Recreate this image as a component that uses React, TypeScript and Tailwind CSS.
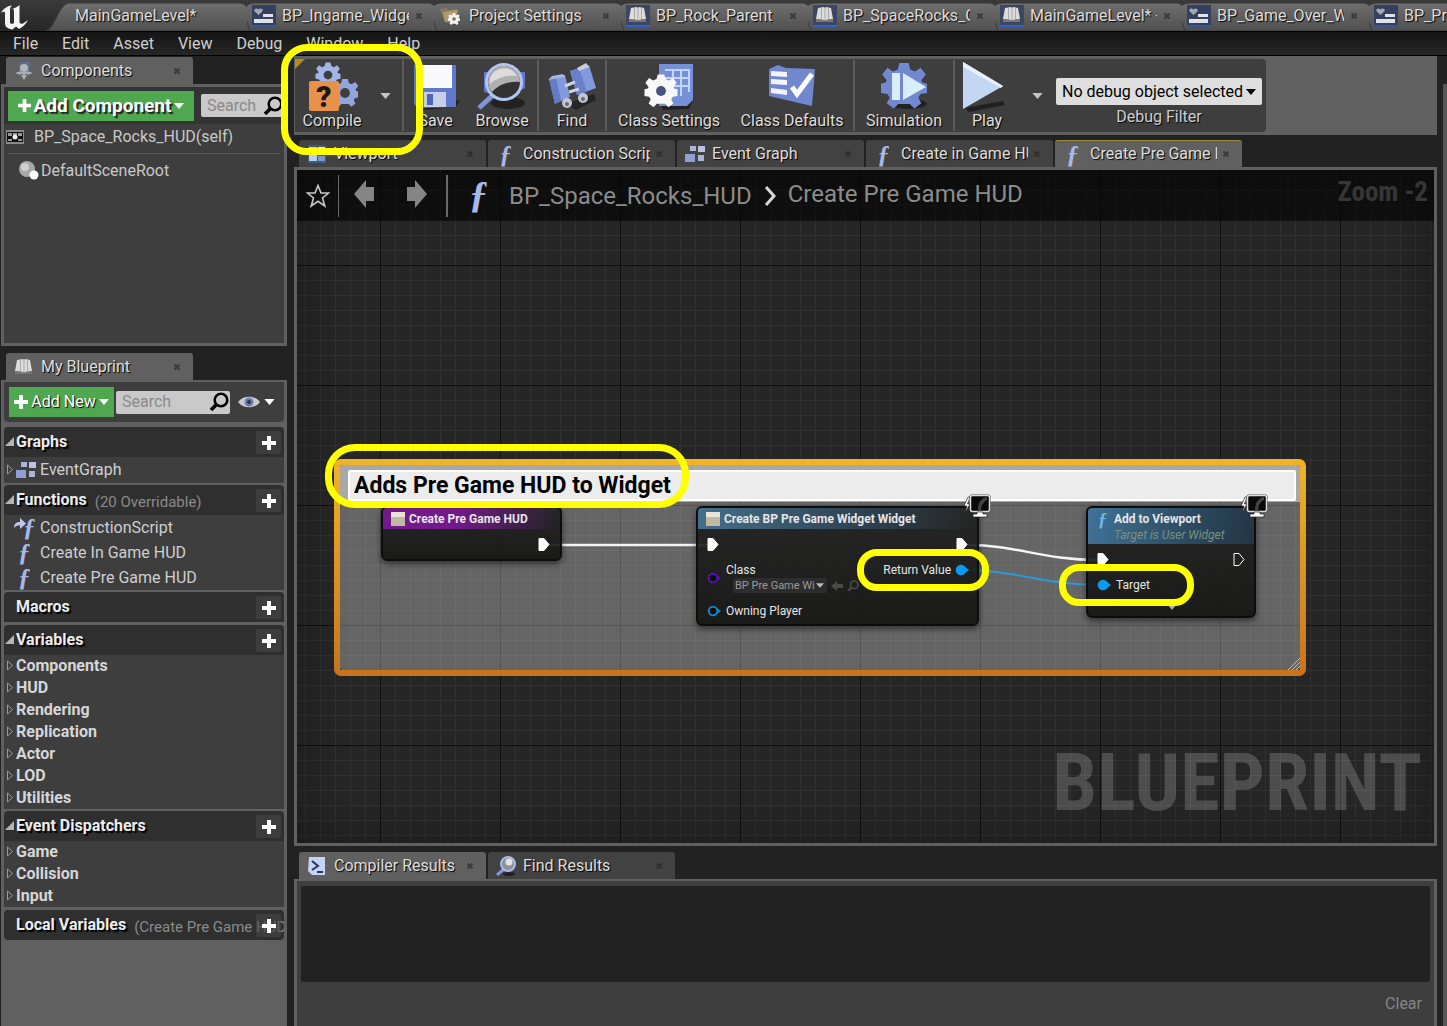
import React from "react";
import type { ReactNode } from "react";

const SHADOW = "[text-shadow:1px_1px_1px_#000]";

/* ---------- small icons ---------- */

function Logo() {
  return (
    <svg viewBox="0 0 30 27" className="h-[27px] w-[30px]" aria-label="Unreal">
      <path
        fill="#f4f4f4"
        d="M1 9C3 5 7 2 12 1.500C10 3.500 10 4.500 10 6V18C10 20 12 20.500 14 19V7C14 5.500 13.500 5 12 5C15 4 18 2.500 20 1C19.500 2 19.500 3 19.500 4.500V18C19.500 19.500 21 20 23 19.500L28 16C26 20 23 23 19 25L16 22.500L12.500 25.500C8 25 5 23 5 19V9C5 7 3 7.500 1 9Z"
      />
    </svg>
  );
}

function WidgetIcon() {
  return (
    <svg viewBox="0 0 24 22" className="h-[22px] w-6">
      <rect width="24" height="22" fill="#33405f" />
      <rect y="20" width="24" height="2" fill="#3a5690" />
      <path d="M6.500 10L2.500 6.200C1.500 4 4.500 2.500 6.500 4.500C8.500 2.500 11.500 4 10.500 6.200Z" fill="#a4a9b1" />
      <rect x="11" y="9" width="10" height="3" fill="#dfe2e7" />
      <rect x="2" y="14" width="19" height="4" fill="#dfe2e7" />
    </svg>
  );
}

function BookShape() {
  return (
    <>
      <path d="M5 3L11 2L12 3L13 2L18 3L20 14L13 15L12 16L11 15L3 14Z" fill="#dcdcdc" />
      <path d="M12 3V15M8.500 3V14M15.500 3V14" stroke="#a9a9a9" strokeWidth="1" fill="none" />
      <path d="M3 14L11 15L12 17L13 15L20 14V17L3 17Z" fill="#777" />
    </>
  );
}

function BlueprintIcon() {
  return (
    <svg viewBox="0 0 24 22" className="h-[22px] w-6">
      <rect width="24" height="22" fill="#3d4660" />
      <rect y="20" width="24" height="2" fill="#2f63c9" />
      <BookShape />
    </svg>
  );
}

function BookIcon() {
  return (
    <svg viewBox="0 0 24 20" className="h-5 w-6">
      <BookShape />
    </svg>
  );
}

const GEAR =
  "M-2 -10H2L2.700 -7.200L4.800 -6.300L7.200 -7.900L9.500 -5L7.500 -2.500L8 -1.500L10 -1V3L7.200 3.500L6.200 5L7.500 7.500L4.500 9.800L2.500 7.800L-2.500 7.800L-4.500 9.800L-7.500 7.500L-6.200 5L-7.200 3.500L-10 3V-1L-8 -1.500L-7.500 -2.500L-9.500 -5L-7.200 -7.900L-4.800 -6.300L-2.700 -7.200Z";

function SettingsFolderIcon() {
  return (
    <svg viewBox="0 0 24 22" className="h-[22px] w-6">
      <path d="M1 4L8 3L10 5L19 4L18 10L12 18L6 17Z" fill="#8d7958" />
      <path d="M4 7L19 5L16 15L6 17Z" fill="#b09a72" />
      <g transform="translate(15 14) scale(.6)">
        <path d={GEAR} fill="#f3f3f3" />
        <circle r="3" fill="#7b6c55" />
      </g>
    </svg>
  );
}

function ComponentsIcon() {
  return (
    <svg viewBox="0 0 20 20" className="h-5 w-5">
      <rect x="5" y="1" width="11" height="9" fill="#5a6f8c" />
      <circle cx="10" cy="7" r="4" fill="#b3b8bf" />
      <path d="M1 12L7 10V14ZM19 12L13 10V14ZM10 19L7 14H13Z" fill="#a9aeb6" />
      <path d="M3 12H17M10 10V16" stroke="#a9aeb6" strokeWidth="2" />
    </svg>
  );
}

function Fn({ big = false, light = false }: { big?: boolean; light?: boolean }) {
  return (
    <span
      aria-hidden="true"
      className={
        "font-['Liberation_Serif',serif] font-bold italic leading-none " +
        (big ? "text-[38px] " : light ? "text-[18px] " : "text-[25px] ") +
        (light ? "text-[#6fb7ea]" : "text-[#a9b9e6]")
      }
    >
      ƒ
    </span>
  );
}

function GraphIcon() {
  return (
    <svg viewBox="0 0 20 18" className="h-[18px] w-5">
      <rect x="5" y="1" width="6" height="5" fill="#a9b6d8" />
      <rect x="13" y="1" width="7" height="6" fill="#b8c4e2" />
      <rect x="0" y="9" width="10" height="8" fill="#8f9fd4" />
      <rect x="13" y="10" width="6" height="6" fill="#a9b6d8" />
    </svg>
  );
}

function ViewportIcon() {
  return (
    <svg viewBox="0 0 20 20" className="h-5 w-5">
      <rect x="1" y="1" width="18" height="18" fill="#41597f" />
      <rect x="2" y="3" width="8" height="14" fill="#b9cdf0" />
      <rect x="11" y="3" width="7" height="8" fill="#e1eafa" />
      <rect x="11" y="12" width="7" height="5" fill="#7d97cf" />
    </svg>
  );
}

function ConsoleIcon() {
  return (
    <svg viewBox="0 0 20 20" className="h-5 w-5">
      <path d="M2 1H18V19H5L1 15Z" fill="#c3d4f5" />
      <path d="M5 5L11 10L5 14M10 16H16" stroke="#2c3550" strokeWidth="2" fill="none" />
    </svg>
  );
}

function Lens({ className }: { className: string }) {
  return (
    <svg viewBox="0 0 20 20" className={className}>
      <circle cx="12" cy="8" r="6.300" fill="none" stroke="currentColor" strokeWidth="2.600" />
      <path d="M8 12L2 18" stroke="currentColor" strokeWidth="3.800" />
    </svg>
  );
}

function FindResultsIcon() {
  return (
    <svg viewBox="0 0 20 20" className="h-5 w-5">
      <ellipse cx="13" cy="18" rx="6" ry="2" fill="#222" />
      <path d="M8 13L1 19" stroke="#8295dd" strokeWidth="3" />
      <circle cx="12" cy="8" r="7" fill="#8d9297" stroke="#a9b9ee" strokeWidth="2" />
      <circle cx="13" cy="6" r="3.500" fill="#e2e2e2" />
    </svg>
  );
}

function Plus({ className }: { className: string }) {
  return (
    <svg viewBox="0 0 14 14" className={className}>
      <path d="M5 0H9V5H14V9H9V14H5V9H0V5H5Z" fill="#fff" />
    </svg>
  );
}

function Caret({ className }: { className: string }) {
  return (
    <svg viewBox="0 0 12 7" className={className} aria-hidden="true">
      <path d="M0 0H12L6 7Z" fill="currentColor" />
    </svg>
  );
}

function Close() {
  return (
    <svg viewBox="0 0 8 8" className="h-2 w-2">
      <path d="M1.500 1.500L6.500 6.500M6.500 1.500L1.500 6.500" stroke="#222" strokeOpacity=".6" strokeWidth="2" />
    </svg>
  );
}

/* ---------- toolbar pictures ---------- */

function Pic({ children }: { children: ReactNode }) {
  return (
    <svg viewBox="0 0 52 50" className="h-[50px] w-[52px]">
      {children}
    </svg>
  );
}

const CompilePic = (
  <Pic>
    <g transform="translate(22 13) scale(1.250)">
      <path d={GEAR} fill="#a3b5e6" />
      <circle r="3.500" fill="#3e3e3e" />
    </g>
    <g transform="translate(39 31) scale(1.400)">
      <path d={GEAR} fill="#93a5dd" />
      <circle r="3.500" fill="#3e3e3e" />
    </g>
    <rect x="3" y="19" width="30" height="30" rx="2" fill="#e8914b" />
    <text x="18" y="45" textAnchor="middle" fontSize="30" fontWeight="900" fontFamily="Roboto" fill="#1a1a1a">
      ?
    </text>
  </Pic>
);

const SavePic = (
  <Pic>
    <path d="M10 44L50 38L46 45L12 48Z" fill="#222" />
    <path d="M4 3H46V45L8 46L4 42Z" fill="#5f78c9" />
    <path d="M8 3H42V26H8Z" fill="#f7f9fd" />
    <rect x="14" y="30" width="22" height="15" fill="#c5cfea" />
    <rect x="17" y="32" width="6" height="11" fill="#4d66b5" />
  </Pic>
);

const BrowsePic = (
  <Pic>
    <ellipse cx="32" cy="41" rx="17" ry="6" fill="#222" />
    <path d="M17 33L3 46" stroke="#7f94db" strokeWidth="5" />
    <path d="M8 10H49V26L30 36L8 30Z" fill="#6279c4" />
    <circle cx="28" cy="20" r="17.500" fill="#333" stroke="#b4c5f5" strokeWidth="3" />
    <path d="M12 20A16 16 0 0 1 44 20C36 19 24 21 16 30A15 15 0 0 1 12 20Z" fill="#b0b0b0" />
    <path d="M14 16A15 15 0 0 1 41 14C32 13 22 15 14 22Z" fill="#dcdcdc" />
  </Pic>
);

const FindPic = (
  <Pic>
    <path d="M20 42L48 32L50 38L30 48Z" fill="#252525" />
    <path d="M24 9L43 3L50 26L31 33Z" fill="#8299e0" />
    <path d="M24 9L33 6L41 30L31 33Z" fill="#6a80cb" />
    <path d="M3 17L19 13L24 35L9 42Z" fill="#8299e0" />
    <path d="M3 17L10 15L15 39L9 42Z" fill="#657bc4" />
    <path d="M31 6L40 1L43 5L33 9Z" fill="#c8cede" />
    <path d="M2 18L6 14L17 12L19 15Z" fill="#a9b5de" />
    <path d="M19 24L29 20M23 30L33 27" stroke="#cdd2df" strokeWidth="3" />
    <circle cx="21" cy="41" r="5" fill="#c3c7d2" />
    <circle cx="37" cy="36" r="5" fill="#c3c7d2" />
    <circle cx="21" cy="42" r="2" fill="#6a6a6a" />
    <circle cx="37" cy="37" r="2" fill="#6a6a6a" />
  </Pic>
);

const SettingsPic = (
  <Pic>
    <path d="M18 42L51 36L46 47L20 48Z" fill="#222" />
    <path d="M16 2H50V38L44 44H16Z" fill="#7590d6" />
    <path d="M22 8H46V30M30 8V30M38 8V34M22 16H46M28 24H46" stroke="#c4d4f8" strokeWidth="2" fill="none" />
    <g transform="translate(18 29) scale(1.650)">
      <path d={GEAR} fill="#f8f8f8" />
      <circle r="3" fill="#47547c" />
    </g>
  </Pic>
);

const DefaultsPic = (
  <Pic>
    <path d="M3 7L12 3L20 6L49 7L46 44L3 34Z" fill="#7187cf" />
    <path d="M5 9L21 10V15L5 14ZM5 17L21 18V23L5 22ZM5 26L21 28V33L5 31Z" fill="#f2f4fa" />
    <path d="M26 25L31 32L46 12" stroke="#fff" strokeWidth="5" fill="none" />
  </Pic>
);

const SimulationPic = (
  <Pic>
    <ellipse cx="30" cy="42" rx="19" ry="5" fill="#222" />
    <g transform="translate(26 24) scale(2.300)">
      <path d={GEAR} fill="#7389cf" />
    </g>
    <path d="M14 11H22V38H14Z" fill="#d8effb" />
    <path d="M25 11L48 25L25 38Z" fill="#d8effb" />
  </Pic>
);

const PlayPic = (
  <Pic>
    <path d="M4 46L42 39L44 43L8 50Z" fill="#202020" />
    <path d="M2 0L42 24L2 47Z" fill="#c3d6f4" />
    <path d="M2 0L42 24L40 26L2 5Z" fill="#e8f0fb" />
  </Pic>
);

/* ---------- window tabs ---------- */

function WindowTab({ label, icon, first = false, closable = true }: { label: string; icon?: ReactNode; first?: boolean; closable?: boolean }) {
  return (
    <button className={"relative flex h-[29px] shrink-0 items-center pb-0.5 text-left " + (first ? "w-[202px] pl-[30px]" : "w-[187px] pl-[5px]")}>
      <svg viewBox="0 0 210 29" preserveAspectRatio="none" className="absolute top-0 left-0 h-full w-[calc(100%+16px)]">
        <defs>
          <linearGradient id="wtab" x2="0" y2="1">
            <stop offset="0" stopColor="#6e6e6e" />
            <stop offset="1" stopColor="#505050" />
          </linearGradient>
        </defs>
        <path
          d={first ? "M0 29C10 27 12 4 22 1H188C200 2 200 25 210 29Z" : "M3 29C-2 14 -8 2 8 1H188C200 2 200 25 210 29Z"}
          fill="url(#wtab)"
          stroke="#3a3a3a"
        />
      </svg>
      {icon && <span className="relative w-[30px]">{icon}</span>}
      <span className={"relative w-[127px] overflow-hidden text-[16px] leading-5 whitespace-nowrap text-[#dcdcdc] " + SHADOW}>{label}</span>
      {closable && (
        <span className="relative ml-1.5">
          <Close />
        </span>
      )}
    </button>
  );
}

function DockTab({ label, icon, active = false, current = false }: { label: string; icon: ReactNode; active?: boolean; current?: boolean }) {
  return (
    <button
      className={
        "flex h-[27px] w-[187px] shrink-0 items-center rounded-t-[3px] text-left " +
        (active ? "bg-[#606060] " : "bg-[#424242] ") +
        (current ? "border-t border-[#a08a3c]" : "border-t border-transparent")
      }
    >
      <span className="flex w-[35px] shrink-0 justify-center">{icon}</span>
      <span className={"w-[127px] overflow-hidden text-[16px] leading-5 whitespace-nowrap text-[#dedede] " + SHADOW}>{label}</span>
      <span className="ml-[5px]">
        <Close />
      </span>
    </button>
  );
}

/* ---------- left column ---------- */

function SearchBox({ id, className }: { id: string; className: string }) {
  return (
    <div className={"flex h-[23px] items-center rounded-[2px] bg-[#c9c9c9] pr-px " + className}>
      <label htmlFor={id} className="sr-only">
        Search
      </label>
      <input id={id} placeholder="Search" className="w-0 min-w-0 flex-1 bg-transparent pl-1.5 text-[16px] leading-5 text-black outline-none placeholder:text-[#8a8a8a]" />
      <Lens className="h-5 w-5 shrink-0 text-black" />
    </div>
  );
}

function SectionHead({ title, note, open }: { title: string; note?: string; open?: boolean }) {
  return (
    <div className="relative flex h-[30px] items-center rounded-t-[4px] bg-[#2f2f2f]">
      <span className="w-3 shrink-0 pl-px">
        {open && (
          <svg viewBox="0 0 9 9" className="-mt-0.5 h-[9px] w-[9px]">
            <path d="M9 0V9H0Z" fill="#b5b5b5" />
          </svg>
        )}
      </span>
      <h2 className="shrink-0 text-[16px] leading-5 font-bold text-[#ececec] [text-shadow:2px_2px_1px_#000]">{title}</h2>
      {note && <span className="ml-2 overflow-hidden pt-[3px] text-[15px] leading-5 whitespace-nowrap text-[#8a8a8a]">{note}</span>}
      <button aria-label={"Add to " + title} className="absolute top-1 right-[3px] flex h-[23px] w-[25px] items-center justify-center rounded-[2px] bg-[#48484899]">
        <Plus className="h-[14px] w-[14px]" />
      </button>
    </div>
  );
}

function Expander() {
  return (
    <svg viewBox="0 0 6 11" className="mx-[3px] -mt-0.5 h-[11px] w-1.5 shrink-0">
      <path d="M.5 1V10L5.500 5.500Z" fill="none" stroke="#9a9a9a" />
    </svg>
  );
}

function Categories({ items }: { items: string[] }) {
  return (
    <ul className="bg-[#3e3e3e]">
      {items.map((t) => (
        <li key={t} className="flex h-[22px] items-center text-[16px] leading-5 font-bold text-[#d6d6d6]">
          <Expander />
          {t}
        </li>
      ))}
    </ul>
  );
}

function FnRow({ label, icon }: { label: string; icon: ReactNode }) {
  return (
    <li className="flex h-[25px] items-center text-[16px] leading-5 text-[#cfcfcf]">
      <span className="ml-2.5 flex w-[26px] shrink-0 pl-1">{icon}</span>
      {label}
    </li>
  );
}

function LeftColumn() {
  return (
    <aside className="flex w-[286px] shrink-0 flex-col overflow-hidden pt-px">
      <div className="flex pl-[5px]">
        <DockTab active label="Components" icon={<ComponentsIcon />} />
      </div>
      <section className="flex h-[262px] shrink-0 flex-col border-[3px] border-[#606060] bg-[#3e3e3e]">
        <div className="flex h-[37px] items-center gap-2 bg-[#333] pl-1">
          <button className="flex h-[30px] w-[186px] items-center justify-center gap-[3px] bg-[#4fa750] text-[19px] leading-6 font-bold text-white [text-shadow:2px_2px_1px_#222]">
            <Plus className="h-[13px] w-[13px]" />
            <span className="whitespace-nowrap">Add Component</span>
            <Caret className="h-1.5 w-[10px]" />
          </button>
          <SearchBox id="component-search" className="-ml-px flex-1" />
        </div>
        <div className="mx-1 flex h-[30px] items-center border-b border-[#565656] pb-1">
          <svg viewBox="0 0 18 14" className="-ml-0.5 h-[14px] w-[18px] shrink-0">
            <rect width="18" height="14" fill="#8a8a8a" />
            <rect x="1" y="2" width="16" height="10" fill="#111" />
            <path d="M2 3H6V6H2ZM7 3H11V5H7ZM12 3H16V6H12ZM2 9H6V11H2ZM12 9H16V11H12Z" fill="#999" />
            <circle cx="9" cy="7" r="2.500" fill="#eee" />
          </svg>
          <span className="ml-2.5 text-[16px] leading-5 text-[#c8c8c8]">BP_Space_Rocks_HUD(self)</span>
        </div>
        <div className="flex h-[34px] items-center pl-[14px]">
          <svg viewBox="0 0 22 20" className="h-5 w-[22px] shrink-0">
            <circle cx="9" cy="8" r="8" fill="#a8a8a8" />
            <circle cx="7" cy="6" r="4" fill="#cfcfcf" />
            <circle cx="16" cy="14" r="4.500" fill="#fff" />
          </svg>
          <span className="ml-px text-[16px] leading-5 text-[#c8c8c8]">DefaultSceneRoot</span>
        </div>
      </section>
      <div className="mt-[7px] flex pl-[5px]">
        <DockTab active label="My Blueprint" icon={<BookIcon />} />
      </div>
      <section className="flex-1 border-x-[3px] border-t-2 border-[#606060] bg-[#606060]">
        <div className="flex h-10 items-center rounded-b-[4px] bg-[#3e3e3e] pl-[5px]">
          <button className={"flex h-[30px] w-[105px] items-center justify-center gap-[3px] bg-[#4fa750] text-[16px] leading-5 text-white " + SHADOW}>
            <Plus className="h-[14px] w-[14px]" />
            <span className="whitespace-nowrap">Add New</span>
            <Caret className="h-1.5 w-[10px]" />
          </button>
          <SearchBox id="blueprint-search" className="ml-0.5 w-[114px]" />
          <button aria-label="View options" className="ml-2 flex items-center gap-1 text-white">
            <svg viewBox="0 0 22 14" className="h-[14px] w-[22px]">
              <path d="M0 7C5 0 17 0 22 7C17 14 5 14 0 7Z" fill="#c9cbd0" />
              <circle cx="11" cy="7" r="4.500" fill="#6d7eaf" />
              <circle cx="11" cy="7" r="2" fill="#2b3350" />
            </svg>
            <Caret className="h-1.5 w-[11px]" />
          </button>
        </div>
        <div className="mt-[5px] flex flex-col gap-0.5">
          <div>
            <SectionHead open title="Graphs" />
            <div className="flex h-[26px] items-center bg-[#3e3e3e] text-[16px] leading-5 text-[#cfcfcf]">
              <Expander />
              <GraphIcon />
              <span className="ml-1">EventGraph</span>
            </div>
          </div>
          <div>
            <SectionHead open title="Functions" note="(20 Overridable)" />
            <ul className="bg-[#3e3e3e]">
              <FnRow
                label="ConstructionScript"
                icon={
                  <span className="-ml-1 flex items-center">
                    <svg viewBox="0 0 12 12" className="-mt-2 h-3 w-3">
                      <path d="M0 10C0 5 3 4 6 4V0L12 5.500L6 11V7.500C4 7 2 8 0 10Z" fill="#c0cbe6" />
                    </svg>
                    <span className="-ml-[3px] flex">
                      <Fn />
                    </span>
                  </span>
                }
              />
              <FnRow label="Create In Game HUD" icon={<Fn />} />
              <FnRow label="Create Pre Game HUD" icon={<Fn />} />
            </ul>
          </div>
          <div className="mb-px">
            <SectionHead title="Macros" />
          </div>
          <div>
            <SectionHead open title="Variables" />
            <Categories items={["Components", "HUD", "Rendering", "Replication", "Actor", "LOD", "Utilities"]} />
          </div>
          <div className="mb-px">
            <SectionHead open title="Event Dispatchers" />
            <Categories items={["Game", "Collision", "Input"]} />
          </div>
          <div className="overflow-hidden rounded-b-[4px]">
            <SectionHead title="Local Variables" note="(Create Pre Game HUD)" />
          </div>
        </div>
      </section>
    </aside>
  );
}

/* ---------- toolbar ---------- */

function Tool({ label, pic, className }: { label: string; pic: ReactNode; className: string }) {
  return (
    <button className={"flex shrink-0 flex-col items-center pt-[3px] " + className}>
      {pic}
      <span className={"text-[16px] leading-[18px] whitespace-nowrap text-[#dedede] " + SHADOW}>{label}</span>
    </button>
  );
}

function Sep() {
  return <span className="my-px w-0.5 shrink-0 bg-[#5c5c5c]" />;
}

function Toolbar() {
  return (
    <div className="h-[79px] shrink-0 bg-[#606060] py-[3px] pl-px">
      <div className="relative flex h-[73px] w-[971px] items-stretch rounded-r-[4px] bg-[#3e3e3e]">
        <svg viewBox="0 0 10 10" className="absolute top-0 left-0 h-2.5 w-2.5">
          <path d="M0 0H10L0 10Z" fill="#b58a22" />
        </svg>
        <Tool label="Compile" pic={CompilePic} className="w-[74px]" />
        <button aria-label="Compile options" className="flex w-[34px] items-center justify-center text-[#c4c4c4]">
          <Caret className="h-1.5 w-[11px]" />
        </button>
        <Sep />
        <Tool label="Save" pic={SavePic} className="w-[63px]" />
        <Tool label="Browse" pic={BrowsePic} className="w-[70px]" />
        <Sep />
        <Tool label="Find" pic={FindPic} className="w-[66px]" />
        <Sep />
        <Tool label="Class Settings" pic={SettingsPic} className="w-[124px]" />
        <Tool label="Class Defaults" pic={DefaultsPic} className="w-[122px]" />
        <Sep />
        <Tool label="Simulation" pic={SimulationPic} className="w-[98px]" />
        <Sep />
        <Tool label="Play" pic={PlayPic} className="w-16" />
        <button aria-label="Play options" className="flex w-[38px] items-center justify-center text-[#c4c4c4]">
          <Caret className="h-1.5 w-[11px]" />
        </button>
        <div className="flex flex-1 flex-col items-center pt-[19px] pr-1 text-[16px]">
          <div className="relative w-[206px]">
            <select id="debug-filter" className="h-[27px] w-full appearance-none rounded-[2px] bg-[#dedede] pl-1.5 text-[16px] leading-5 text-black">
              <option>No debug object selected</option>
            </select>
            <Caret className="pointer-events-none absolute top-[11px] right-1.5 h-1.5 w-[10px] text-black" />
          </div>
          <label htmlFor="debug-filter" className={"mt-0.5 leading-5 text-[#cfcfcf] " + SHADOW}>
            Debug Filter
          </label>
        </div>
      </div>
    </div>
  );
}

/* ---------- graph ---------- */

function ExecPin({ hollow = false }: { hollow?: boolean }) {
  return (
    <svg viewBox="0 0 12 13" className="h-[13px] w-3">
      <path d="M1 .5H6L11 6.500L6 12.500H1Z" fill={hollow ? "none" : "#fff"} stroke="#fff" />
    </svg>
  );
}

function DataPin({ color, hollow = false }: { color: string; hollow?: boolean }) {
  return (
    <svg viewBox="0 0 14 12" className="h-3 w-[14px] shrink-0">
      <circle cx="6" cy="6" r="4.300" fill={hollow ? "#0c0c0c" : color} stroke={color} strokeWidth="2" />
      <path d="M10 3L14 6L10 9Z" fill={color} />
    </svg>
  );
}

function BoxIcon() {
  return (
    <svg viewBox="0 0 14 14" className="h-[14px] w-[14px] shrink-0">
      <rect width="14" height="5" fill="#e9e4d6" />
      <rect y="5" width="14" height="9" fill="#c2baa0" />
    </svg>
  );
}

function MonitorBadge() {
  return (
    <svg viewBox="0 0 28 24" className="absolute -top-3 -right-3 h-6 w-7">
      <path d="M5 3L1 12H4L2 19L7 10H4.500L7 3Z" fill="#fff" stroke="#222" strokeWidth=".7" />
      <rect x="6.500" y=".5" width="21" height="18" rx="2.500" fill="#333" />
      <rect x="7.500" y="1.500" width="19" height="16" rx="2" fill="#0a0a0a" stroke="#ddd" strokeWidth="1.500" />
      <path d="M15 16C15 9 18 4 24 3V6C20 8 18 12 18 16Z" fill="#444" />
      <path d="M14 18H20V20H24V23H10V20H14Z" fill="#fff" stroke="#222" strokeWidth=".7" />
    </svg>
  );
}

const NODE =
  "absolute rounded-[6px] border-2 border-[#0d0d0d] bg-[linear-gradient(#1f201fe8,#131412e8)] text-[12px] leading-4 text-[#e6e6e6] shadow-[0_3px_6px_rgba(0,0,0,.5)]";

const RING = "pointer-events-none absolute border-[7px] border-[#ffff00]";

function Canvas() {
  return (
    <div className="relative min-h-0 flex-1 overflow-hidden border-[3px] border-[#606060] bg-[#262626] [background-image:linear-gradient(to_right,#101010_1px,transparent_1px),linear-gradient(#101010_1px,transparent_1px),linear-gradient(to_right,#313131_1px,transparent_1px),linear-gradient(#313131_1px,transparent_1px)] [background-position:83px_0,0_95px,8px_0,0_5px] [background-size:120px_120px,120px_120px,15px_15px,15px_15px]">
      <div className="pointer-events-none absolute inset-0 shadow-[inset_0_0_50px_rgba(0,0,0,.35)]" />
      <span className="pointer-events-none absolute right-3 bottom-3 font-['Roboto_Condensed','Roboto',sans-serif] text-[80px] leading-[96px] font-bold text-[#ffffff2e]">
        BLUEPRINT
      </span>

      {/* comment box */}
      <div className="absolute top-[289px] left-[37px] h-[217px] w-[972px] rounded-[7px] bg-[linear-gradient(#f0b428,#c9731c)] [clip-path:polygon(evenodd,0_0,100%_0,100%_100%,0_100%,0_0,6px_6px,966px_6px,966px_211px,6px_211px,6px_6px)]" />
      <div className="absolute top-[295px] left-[43px] h-[205px] w-[960px] rounded-[2px] bg-[#ffffff4a]">
        <div className="h-[37px] bg-[#ffffff70] pt-[5px] pr-1 pl-2">
          <label htmlFor="comment" className="sr-only">
            Comment
          </label>
          <input
            id="comment"
            defaultValue="Adds Pre Game HUD to Widget"
            className="h-[31px] w-full rounded-[2px] border-2 border-white bg-[#ececec] pl-1 text-[23px] leading-7 font-bold text-black outline-none"
          />
        </div>
        <svg viewBox="0 0 12 12" className="absolute right-0 bottom-0 h-3 w-3">
          <path d="M0 12L12 0M4 12L12 4M8 12L12 8" stroke="#bbb" />
        </svg>
      </div>

      {/* wires */}
      <svg className="pointer-events-none absolute top-0 left-0 h-[640px] w-[1100px]" fill="none">
        <path d="M253 375H412" stroke="#f4f4f4" strokeWidth="2.500" />
        <path d="M671 375C720 375 745 390 801 390" stroke="#f4f4f4" strokeWidth="2.500" />
        <path d="M670 400C715 400 750 415 801 415" stroke="#2b9bdd" strokeWidth="2" />
      </svg>

      {/* nodes */}
      <div className={NODE + " top-[336px] left-[84px] h-[55px] w-[181px]"}>
        <div className="flex h-[21px] items-center gap-1 rounded-t-[4px] bg-[linear-gradient(90deg,#74198b_40%,#7a1a9200)] pl-2 font-bold">
          <BoxIcon />
          <span className="whitespace-nowrap">Create Pre Game HUD</span>
        </div>
        <div className="flex justify-end pt-[9px] pr-2.5">
          <ExecPin />
        </div>
      </div>

      <div className={NODE + " top-[336px] left-[399px] h-[120px] w-[283px]"}>
        <div className="flex h-[21px] items-center gap-1 rounded-t-[4px] bg-[linear-gradient(90deg,#456f8b,#2f4555_55%,#26272600)] pl-2 font-bold">
          <BoxIcon />
          <span className="whitespace-nowrap">Create BP Pre Game Widget Widget</span>
        </div>
        <div className="flex justify-between px-[9px] pt-[9px]">
          <ExecPin />
          <ExecPin />
        </div>
        <div className="flex items-start pt-[11px] pr-2 pl-[9px]">
          <span className="mt-2.5">
            <DataPin hollow color="#5a0fb0" />
          </span>
          <div className="ml-[5px]">
            <label htmlFor="class-pin" className="block leading-4">
              Class
            </label>
            <div className="ml-[7px] flex items-center gap-1">
              <div className="relative">
                <select id="class-pin" className="block h-[15px] w-[94px] appearance-none rounded-[2px] bg-[#2c2d2c] pl-0.5 text-[11px] leading-[15px] text-[#9a9a9a]">
                  <option>BP Pre Game Wi</option>
                </select>
                <Caret className="pointer-events-none absolute top-[5px] right-[3px] h-[5px] w-2 text-[#bbb]" />
              </div>
              <svg viewBox="0 0 12 10" className="h-2.5 w-3">
                <path d="M0 5L6 0V3H12V7H6V10Z" fill="#4a4a4a" />
              </svg>
              <Lens className="h-3 w-3 text-[#4a4a4a]" />
            </div>
          </div>
          <span className="ml-auto flex items-center gap-1">
            <span className="whitespace-nowrap">Return Value</span>
            <DataPin color="#0a9bf0" />
          </span>
        </div>
        <div className="mt-2.5 flex items-center gap-[5px] pl-[9px]">
          <DataPin hollow color="#1583c4" />
          Owning Player
        </div>
      </div>

      <div className={NODE + " top-[336px] left-[789px] h-[112px] w-[170px]"}>
        <div className="flex h-9 gap-1 rounded-t-[4px] bg-[linear-gradient(100deg,#3f7398,#2b4b62_60%,#233544)] pt-[3px] pl-2.5">
          <span className="flex w-3">
            <Fn light />
          </span>
          <div className="whitespace-nowrap">
            <div className="font-bold">Add to Viewport</div>
            <div className="text-[#7d8f7f] italic">Target is User Widget</div>
          </div>
        </div>
        <div className="flex justify-between px-[9px] pt-[9px]">
          <ExecPin />
          <ExecPin hollow />
        </div>
        <div className="flex items-center gap-[5px] pt-[11px] pl-[9px]">
          <DataPin color="#0a9bf0" />
          Target
        </div>
        <Caret className="absolute bottom-1.5 left-[79px] h-1.5 w-2.5 text-[#aaa]" />
      </div>

      <div className="absolute top-[336px] left-[399px] w-[283px]">
        <MonitorBadge />
      </div>
      <div className="absolute top-[336px] left-[789px] w-[170px]">
        <MonitorBadge />
      </div>

      {/* breadcrumb strip */}
      <div className="absolute inset-x-0 top-0 flex h-[51px] items-center bg-[#00000099] pb-1 text-[24px] leading-7 text-[#8c8c8c]">
        <button aria-label="Favourite" className="flex w-[41px] justify-center pt-1">
          <svg viewBox="0 0 24 24" className="h-6 w-6">
            <path d="M12 1.500L15 9H22.500L16.500 14L18.800 22L12 17.300L5.200 22L7.500 14L1.500 9H9Z" fill="none" stroke="#c9c9c9" strokeWidth="1.600" />
          </svg>
        </button>
        <span className="mt-1 h-[42px] w-px bg-[#6a6a6a]" />
        <button aria-label="Back" className="ml-[15px]">
          <svg viewBox="0 0 22 28" className="h-7 w-[22px]">
            <path d="M0 14L12 0V7H20V21H12V28Z" fill="#858585" />
          </svg>
        </button>
        <button aria-label="Forward" className="ml-[29px]">
          <svg viewBox="0 0 22 28" className="h-7 w-[22px]">
            <path d="M22 14L10 0V7H2V21H10V28Z" fill="#858585" />
          </svg>
        </button>
        <span className="mt-1 ml-[19px] h-[42px] w-0.5 bg-[#6a6a6a]" />
        <span className="flex w-[61px] justify-center">
          <Fn big />
        </span>
        <span className="pt-1">BP_Space_Rocks_HUD</span>
        <svg viewBox="0 0 12 20" className="mx-3 mt-1 h-5 w-3">
          <path d="M2 1L10 10L2 19" fill="none" stroke="#d8d8d8" strokeWidth="3" />
        </svg>
        <span>Create Pre Game HUD</span>
        <span className="mr-1.5 ml-auto pb-1 font-['Roboto_Condensed','Roboto',sans-serif] text-[27px] font-bold text-[#363636]">Zoom -2</span>
      </div>

      <div className={RING + " top-[274px] left-[28px] h-[64px] w-[364px] rounded-[30px]"} />
      <div className={RING + " top-[379px] left-[560px] h-[42px] w-[132px] rounded-[20px]"} />
      <div className={RING + " top-[394px] left-[762px] h-[42px] w-[135px] rounded-[20px]"} />
    </div>
  );
}

/* ---------- page ---------- */

export default function App() {
  return (
    <div className="relative flex h-screen flex-col overflow-hidden bg-[#222] font-['Roboto',sans-serif]">
      <header className="flex h-[31px] shrink-0 items-end overflow-hidden bg-[linear-gradient(#3a3a3a,#262626)]">
        <span className="w-[45px] shrink-0">
          <Logo />
        </span>
        <WindowTab first closable={false} label="MainGameLevel*" />
        <WindowTab label="BP_Ingame_Widge" icon={<WidgetIcon />} />
        <WindowTab label="Project Settings" icon={<SettingsFolderIcon />} />
        <WindowTab label="BP_Rock_Parent" icon={<BlueprintIcon />} />
        <WindowTab label="BP_SpaceRocks_G" icon={<BlueprintIcon />} />
        <WindowTab label="MainGameLevel* -" icon={<BlueprintIcon />} />
        <WindowTab label="BP_Game_Over_Wi" icon={<WidgetIcon />} />
        <WindowTab label="BP_Pre" icon={<WidgetIcon />} />
      </header>
      <nav className="flex h-[25px] shrink-0 items-center gap-6 border-y border-black bg-[linear-gradient(#151515,#262626)] pl-[13px] text-[16px] leading-5 text-[#cfcfcf]">
        {["File", "Edit", "Asset", "View", "Debug", "Window", "Help"].map((m) => (
          <button key={m}>{m}</button>
        ))}
      </nav>
      <div className="flex min-h-0 flex-1 pl-px">
        <LeftColumn />
        <main className="ml-[7px] flex min-w-0 flex-1 flex-col">
          <Toolbar />
          <div className="flex shrink-0 gap-0.5 pt-[5px] pl-[5px]">
            <DockTab label="Viewport" icon={<ViewportIcon />} />
            <DockTab label="Construction Script" icon={<Fn />} />
            <DockTab label="Event Graph" icon={<GraphIcon />} />
            <DockTab label="Create in Game HUD" icon={<Fn />} />
            <DockTab active current label="Create Pre Game HUD" icon={<Fn />} />
          </div>
          <Canvas />
          <div className="mt-1.5 flex shrink-0 gap-0.5 pl-[5px]">
            <DockTab active label="Compiler Results" icon={<ConsoleIcon />} />
            <DockTab label="Find Results" icon={<FindResultsIcon />} />
          </div>
          <section className="h-[147px] shrink-0 border-x-[3px] border-t-2 border-[#606060] bg-[#3e3e3e] px-1 pt-[5px]">
            <div className="h-24 rounded-[2px] bg-[#222]" />
            <div className="flex justify-end pt-3 pr-2">
              <button className="text-[16px] leading-5 text-[#858585]">Clear</button>
            </div>
          </section>
        </main>
        <div className="mt-7 ml-1.5 w-1 shrink-0 bg-[#555]" />
      </div>
      <div className={RING + " top-[44px] left-[281px] h-[111px] w-[142px] rounded-[26px]"} />
    </div>
  );
}
